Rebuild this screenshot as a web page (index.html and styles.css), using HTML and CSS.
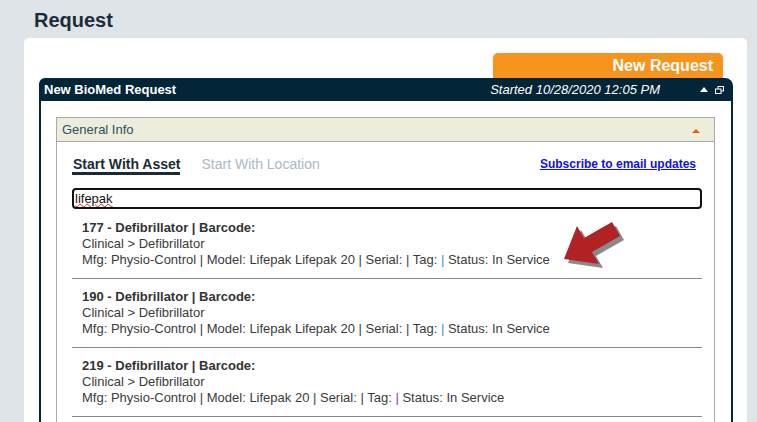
FILE: index.html
```html
<!DOCTYPE html>
<html lang="en">
<head>
	<meta charset="UTF-8">
	<title>Request</title>
	<link rel="stylesheet" href="styles.css">
</head>
<body>
	<h1 class="page-title">Request</h1>
	<div class="card">
		<div class="tab-row">
			<div class="new-tab">New Request</div>
		</div>
		<div class="panel">
			<div class="panel-head">
				<span class="panel-title">New BioMed Request</span>
				<span class="panel-started">Started 10/28/2020 12:05 PM</span>
				<span class="panel-icons">
					<svg width="8" height="5" viewBox="0 0 8 5"><polygon points="0,5 4,0 8,5" fill="#fff"/></svg>
					<svg width="9" height="8" viewBox="0 0 9 8"><rect x="3" y="0.5" width="5.5" height="4.5" fill="none" stroke="#fff" stroke-width="1"/><rect x="0.5" y="3" width="5.5" height="4.5" fill="#022538" stroke="#fff" stroke-width="1"/></svg>
				</span>
			</div>
			<div class="panel-body">
				<div class="section">
					<div class="section-head">
						<span>General Info</span>
						<svg width="8" height="4" viewBox="0 0 8 4"><polygon points="0,4 4,0 8,4" fill="#e5600e"/></svg>
					</div>
					<div class="section-body">
						<div class="tabs-row">
							<div class="tabs">
								<span class="tab active">Start With Asset</span>
								<span class="tab">Start With Location</span>
							</div>
							<a class="subscribe" href="#">Subscribe to email updates</a>
						</div>
						<div class="search"><span class="typo">lifepak</span></div>
						<ul class="results">
							<li>
								<div class="res-title">177 - Defibrillator | Barcode:</div>
								<div>Clinical &gt; Defibrillator</div>
								<div>Mfg: Physio-Control | Model: Lifepak Lifepak 20 | Serial: | Tag: <span class="pipe-blue">|</span> Status: In Service</div>
								<svg class="arrow" width="75" height="55" viewBox="0 0 75 55">
									<polygon points="13,47 26,14 33,26 61,10 69,24 41,40 48,52" fill="#8a8a8a"/>
									<polygon points="9,43 22,10 29,22 57,6 65,20 37,36 44,48" fill="#b02224"/>
								</svg>
							</li>
							<li>
								<div class="res-title">190 - Defibrillator | Barcode:</div>
								<div>Clinical &gt; Defibrillator</div>
								<div>Mfg: Physio-Control | Model: Lifepak Lifepak 20 | Serial: | Tag: <span class="pipe-blue">|</span> Status: In Service</div>
							</li>
							<li>
								<div class="res-title">219 - Defibrillator | Barcode:</div>
								<div>Clinical &gt; Defibrillator</div>
								<div>Mfg: Physio-Control | Model: Lifepak 20 | Serial: | Tag: <span class="pipe-purple">|</span> Status: In Service</div>
							</li>
						</ul>
					</div>
				</div>
			</div>
		</div>
	</div>
</body>
</html>
```

FILE: styles.css
```css
*{margin: 0;padding: 0;box-sizing: border-box;}
html,body{height: 100%;overflow: hidden;}
body{background: #dee4e8;font-family: "Liberation Sans", Arial, sans-serif;color: #333;}
.page-title{font-size: 20px;line-height: 20px;font-weight: bold;color: #1b2d3b;padding: 10px 0 8px 34px;}
.card{background: #fff;margin: 0 10px 0 24px;border-radius: 5px 5px 0 0;padding: 15px 14px 0 15px;height: 400px;}
.tab-row{display: flex;justify-content: flex-end;padding-right: 10px;}
.new-tab{width: 230px;height: 25px;background: #f7941d;color: #fff;font-weight: bold;font-size: 16px;line-height: 25px;text-align: right;padding-right: 10px;border-radius: 5px 5px 0 0;}
.panel{background: #022538;border-radius: 6px 8px 0 0;padding: 0 2px;}
.panel-head{display: flex;align-items: center;height: 23px;padding: 0 7px 0 3px;color: #fff;font-size: 13px;}
.panel-title{flex: 1;font-weight: bold;}
.panel-started{font-style: italic;margin-right: 40px;}
.panel-icons{display: flex;align-items: center;gap: 7px;}
.panel-icons svg{display: block;}
.panel-body{background: #fff;padding: 16px 16px 0 15px;height: 400px;}
.section{border: 1px solid #aaa;border-bottom: none;height: 400px;}
.section-head{background: #eeeddb;border-bottom: 1px solid #aaa;height: 24px;display: flex;align-items: center;justify-content: space-between;padding: 0 14px 0 5px;font-size: 13px;color: #2a5264;}
.section-head svg{display: block;margin-top: 2px;}
.section-body{padding: 14px 12px 0 15px;}
.tabs-row{display: flex;justify-content: space-between;align-items: flex-start;padding-right: 6px;}
.tabs{display: flex;gap: 20px;}
.tab{font-size: 14px;line-height: 16px;color: #a9b9c7;padding-left: 1px;}
.tab.active{font-weight: bold;color: #1a2b38;border-bottom: 3px solid #1a2b38;}
.subscribe{font-size: 12px;font-weight: bold;color: #1010e8;line-height: 16px;}
.search{margin-top: 13px;height: 21px;border: 2px solid #111;border-radius: 4px;font-size: 13px;line-height: 16px;padding: 1px 0 0 1px;color: #111;overflow: hidden;}
.typo{text-decoration: underline wavy #e0201a;text-decoration-thickness: 1px;text-underline-offset: 0;}
.results{list-style: none;margin-top: 1px;}
.results li{position: relative;padding: 10px 10px 10px 10px;border-bottom: 1px solid #888;font-size: 13px;line-height: 16px;color: #3b3b3b;}
.res-title{font-weight: bold;color: #333;}
.pipe-blue{color: #3b8fd6;}
.pipe-purple{color: #8a3b9e;}
.arrow{position: absolute;left: 483px;top: 6px;}
```
